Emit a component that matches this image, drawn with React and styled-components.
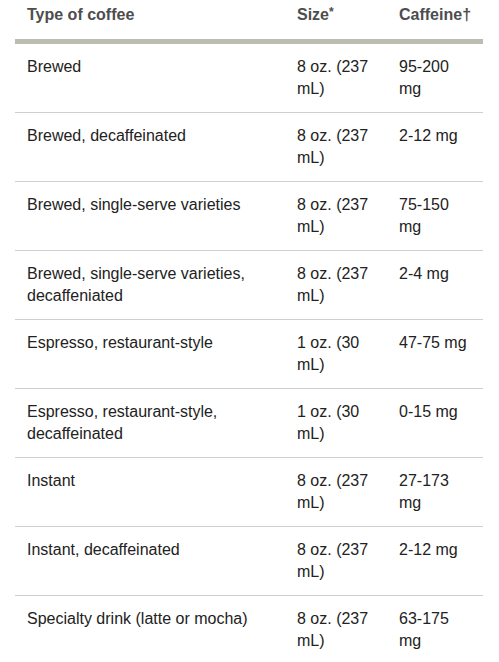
import React from "react";
import styled, { createGlobalStyle } from "styled-components";

const Global = createGlobalStyle`
  html, body { margin: 0; padding: 0; background: #fff; }
  body { font-family: "Liberation Sans", Arial, sans-serif; }
`;

const Wrap = styled.div`
  padding: 0 16px 0 15px;
`;

const Table = styled.table`
  width: 468px;
  border-collapse: collapse;
  table-layout: fixed;
  font-family: "Liberation Sans", Arial, sans-serif;
  font-size: 16px;
  line-height: 22px;
`;

const Th = styled.th`
  text-align: left;
  font-weight: bold;
  color: #4d4d4d;
  padding: 4px 12px 13px;
  border-bottom: 5px solid #bbbcb2;
  vertical-align: top;
`;

const Mark = styled.span`
  font-size: 12px;
  vertical-align: top;
  line-height: 16px;
`;

const Td = styled.td`
  color: #222;
  padding: 12px 12px 12px;
  vertical-align: top;
  border-bottom: 1px solid #cfcfcf;
`;

const Row = styled.tr`
  &:last-child td { border-bottom: none; }
`;

const rows = [
  ["Brewed", "8 oz. (237 mL)", "95-200 mg"],
  ["Brewed, decaffeinated", "8 oz. (237 mL)", "2-12 mg"],
  ["Brewed, single-serve varieties", "8 oz. (237 mL)", "75-150 mg"],
  ["Brewed, single-serve varieties, decaffeniated", "8 oz. (237 mL)", "2-4 mg"],
  ["Espresso, restaurant-style", "1 oz. (30 mL)", "47-75 mg"],
  ["Espresso, restaurant-style, decaffeinated", "1 oz. (30 mL)", "0-15 mg"],
  ["Instant", "8 oz. (237 mL)", "27-173 mg"],
  ["Instant, decaffeinated", "8 oz. (237 mL)", "2-12 mg"],
  ["Specialty drink (latte or mocha)", "8 oz. (237 mL)", "63-175 mg"],
];

export default function App() {
  return (
    <Wrap>
      <Global />
      <Table>
        <colgroup>
          <col style={{ width: 270 }} />
          <col style={{ width: 102 }} />
          <col style={{ width: 96 }} />
        </colgroup>
        <thead>
          <tr>
            <Th>Type of coffee</Th>
            <Th>Size<Mark>*</Mark></Th>
            <Th>Caffeine†</Th>
          </tr>
        </thead>
        <tbody>
          {rows.map((r) => (
            <Row key={r[0]}>
              <Td>{r[0]}</Td>
              <Td>{r[1]}</Td>
              <Td>{r[2]}</Td>
            </Row>
          ))}
        </tbody>
      </Table>
    </Wrap>
  );
}
